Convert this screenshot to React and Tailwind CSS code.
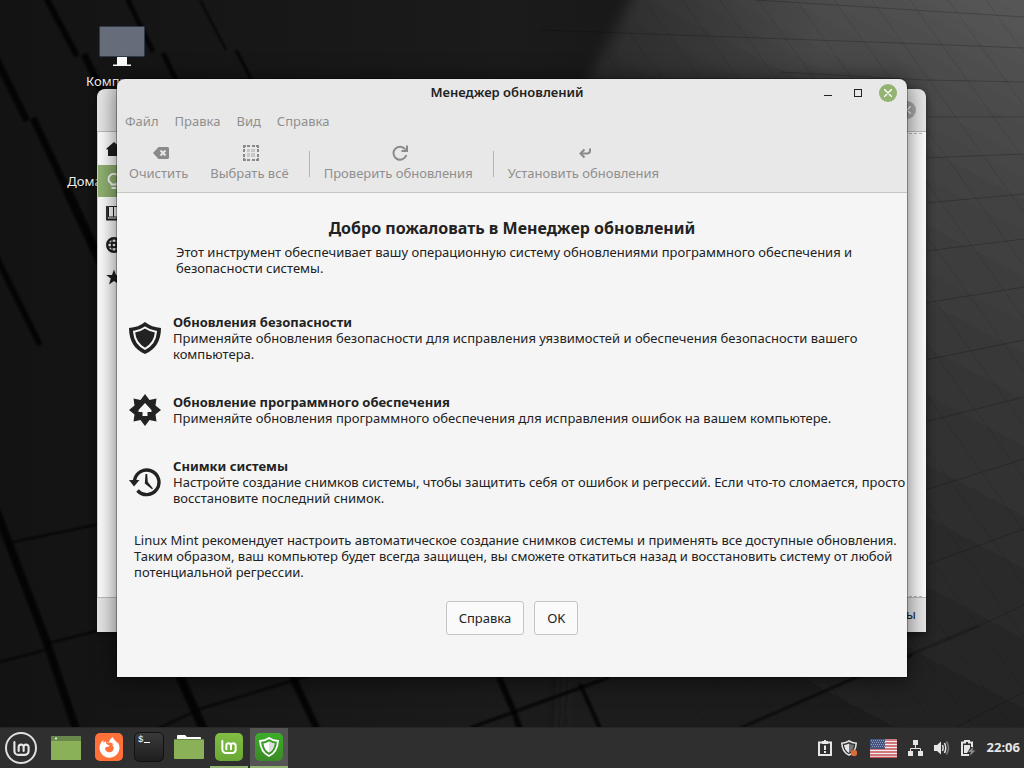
import React from "react";
import { FaFirefoxBrowser } from "react-icons/fa";

const GROOVES = [
  ["M42 -10 L77 56", 6], ["M84 54 L134 160", 7], ["M126 -4 L153 52", 5], ["M163 53 L200 130", 5],
  ["M200 0 L226 50", 2], ["M236 50 L262 100", 3], ["M-4 58 L27 121", 7], ["M33 118 L66 188", 7],
  ["M66 188 L110 282", 9], ["M-4 256 L40 345", 6], ["M-4 510 L46 640 L78 735", 8],
  ["M176 668 L206 735", 9], ["M292 676 L320 735", 7], ["M496 670 L514 712 L522 735", 6],
  ["M580 684 L603 735", 4],
];
const SEAMS = [
  ["M8 543 L100 524", 2], ["M46 644 L100 630", 2], ["M0 662 L45 650", 2], ["M155 730 L200 709 L295 680 L330 668", 2],
  ["M470 728 L610 677", 3], ["M738 729 L850 680 L912 655", 2], ["M900 659 L978 626", 1],
];
const ROWS = [
  "M755 0 L1024 17", "M540 30 L925 44 L1024 48", "M780 72 L925 80 L1024 82", "M925 117 L1024 117",
  "M925 158 L1024 154", "M925 203 L1024 194", "M925 251 L1024 239", "M925 303 L1024 287",
  "M925 360 L1024 340", "M925 422 L1024 397", "M925 490 L1024 459", "M925 565 L1024 529",
  "M970 630 L1024 605", "M955 728 L1024 692",
];
const DIAGONALS = Array.from({ length: 24 }, (_, i) => 150 + i * 38);

function Wallpaper() {
  return (
    <svg className="absolute inset-0 h-full w-full" viewBox="0 0 1024 727" preserveAspectRatio="none" aria-hidden="true">
      <defs>
        <linearGradient id="light" gradientUnits="userSpaceOnUse" x1="1024" y1="0" x2="660" y2="680">
          <stop offset="0" stopColor="#575757" />
          <stop offset="0.22" stopColor="#444444" />
          <stop offset="0.5" stopColor="#343434" />
          <stop offset="0.8" stopColor="#252525" />
          <stop offset="1" stopColor="#1b1b1b" />
        </linearGradient>
        <linearGradient id="fade" x1="0" y1="0" x2="1" y2="0">
          <stop offset="0" stopColor="#161616" stopOpacity="0" />
          <stop offset="0.35" stopColor="#161616" stopOpacity="0.45" />
          <stop offset="1" stopColor="#161616" stopOpacity="0" />
        </linearGradient>
        <linearGradient id="dark" x1="0" y1="0" x2="1" y2="0">
          <stop offset="0" stopColor="#131313" />
          <stop offset="0.5" stopColor="#1b1b1b" />
          <stop offset="1" stopColor="#1b1b1b" />
        </linearGradient>
        <filter id="soft" x="-10%" y="-10%" width="120%" height="120%">
          <feGaussianBlur stdDeviation="7" />
        </filter>
        <filter id="groove">
          <feGaussianBlur stdDeviation="1" />
        </filter>
        <clipPath id="lit">
          <path d="M645 0 H1024 V727 H680 V100 H575 Z" />
        </clipPath>
      </defs>
      <rect width="1024" height="727" fill="url(#dark)" />
      <path d="M645 -30 L590 80 L560 727 L560 800 H1070 V-30 Z" fill="url(#light)" filter="url(#soft)" />
      <rect x="500" width="320" height="160" fill="url(#fade)" />
      <g fill="none" stroke="#060606" strokeOpacity="0.8" filter="url(#groove)">
        {GROOVES.map(([d, w]) => <path key={d} d={d} strokeWidth={w} />)}
        {SEAMS.map(([d, w]) => <path key={d} d={d} strokeWidth={w} />)}
      </g>
      <g fill="none" stroke="#000" strokeOpacity="0.2">
        {ROWS.map((d) => <path key={d} d={d} />)}
      </g>
      <g fill="none" stroke="#000" strokeOpacity="0.1" clipPath="url(#lit)">
        {DIAGONALS.map((x) => <path key={x} d={`M${x} 0 L${x + 520} 727`} />)}
      </g>
    </svg>
  );
}

function MintGlyph({ className }) {
  return (
    <svg className={className} viewBox="0 0 24 24" fill="none" stroke="currentColor" strokeWidth="3" strokeLinecap="round" aria-hidden="true">
      <path d="M2 3 V15.5 A5.500 5.500 0 0 0 7.500 21 H17 A5 5 0 0 0 22 16 V10 A3.500 3.500 0 0 0 15 10 V15.500 M15 10 A3.500 3.500 0 0 0 8 10 V15.500" />
    </svg>
  );
}

function CloseGlyph() {
  return (
    <svg className="size-2" viewBox="0 0 8 8" stroke="#fff" strokeWidth="1.4" strokeLinecap="round" aria-hidden="true">
      <path d="M0.500 0.500 L7.500 7.500 M7.500 0.500 L0.500 7.500" />
    </svg>
  );
}

const SIDEBAR = [
  { name: "Добро пожаловать", icon: <path d="M8 1 L0.500 7.500 V8.500 H2 V15 H14 V8.500 H15.500 V7.500 Z" fill="currentColor" /> },
  {
    name: "Первые шаги", active: true,
    icon: (
      <g fill="none" stroke="currentColor" strokeWidth="1.800">
        <path d="M5.500 11.500 V10.500 C3.500 9.500 2.500 8 2.500 6 A5.500 5.200 0 0 1 13.500 6 C13.500 8 12.500 9.500 10.500 10.500 V11.500 Z" />
        <path d="M5.500 15 H10.500" />
      </g>
    ),
  },
  {
    name: "Документация",
    icon: (
      <g fill="none" stroke="currentColor">
        <path d="M1 1 V14.500 H15 V1" strokeWidth="1.800" />
        <path d="M2.500 1.500 H7.500 V12 H2.500 Z M7.500 1.500 H13.500 V12 H7.500 Z" />
      </g>
    ),
  },
  {
    name: "Помощь",
    icon: (
      <g fill="none" stroke="currentColor">
        <circle cx="8" cy="8" r="6.800" strokeWidth="2.400" />
        <circle cx="8" cy="8" r="2.500" strokeWidth="1.500" />
        <path d="M6 1 V15 M10 1 V15 M1 6 H15 M1 10 H15" strokeWidth="1.300" />
      </g>
    ),
  },
  { name: "Участие", icon: <path d="M8 0.500 L10 6 H15.800 L11.200 9.500 L13 15.500 L8 12 L3 15.500 L4.800 9.500 L0.200 6 H6 Z" fill="currentColor" /> },
];

function WelcomeWindow() {
  return (
    <section aria-label="Добро пожаловать" className="absolute top-[89px] right-[98px] left-[97px] flex flex-col overflow-hidden rounded-t-lg bg-[#e8e8e8] shadow-[0_2px_8px_rgba(0,0,0,0.5)]">
      <header className="flex h-[43px] items-center justify-end border-b border-[#bdbdbd] pr-2.5">
        <button aria-label="Закрыть окно приветствия" className="flex size-[18px] items-center justify-center rounded-full bg-[#adadad]"><CloseGlyph /></button>
      </header>
      <div className="flex min-h-[465px] border-l border-[#cfcfcf] bg-white pt-px">
        <nav className="w-44">
          {SIDEBAR.map((s) => (
            <button key={s.name} aria-label={s.name} className={s.active ? "flex h-8 w-full items-center bg-[#92b372] pl-2 text-white" : "flex h-8 w-full items-center pl-2 text-[#1f1f1f]"}>
              <svg className="size-4" viewBox="0 0 16 16" aria-hidden="true">{s.icon}</svg>
            </button>
          ))}
        </nav>
        <div className="mr-1 flex-1 border-y border-dashed border-[#bdbdbd]" />
      </div>
      <footer className="flex h-[35px] items-center justify-end border-t border-[#bdbdbd] pr-2.5">системы</footer>
    </section>
  );
}

const TOOLS = {
  clear: (
    <>
      <path d="M5.500 2 H14.500 A1.500 1.500 0 0 1 16 3.500 V12.500 A1.500 1.500 0 0 1 14.500 14 H5.500 L0 8 Z" fill="#8a8a8a" />
      <path d="M7.500 5.500 L12.500 10.500 M12.500 5.500 L7.500 10.500" stroke="#e8e8e8" strokeWidth="2" />
    </>
  ),
  select: (
    <>
      <path d="M0 1 H3 M4 1 H7 M9 1 H12 M13 1 H16 M0 15 H3 M4 15 H7 M9 15 H12 M13 15 H16 M1 0 V3 M1 4 V7 M1 9 V12 M1 13 V16 M15 0 V3 M15 4 V7 M15 9 V12 M15 13 V16" stroke="#8a8a8a" strokeWidth="2" fill="none" />
      <path d="M4 4 H7 V7 H4 Z M8 4 H12 V7 H8 Z M4 8 H7 V12 H4 Z M8 8 H12 V12 H8 Z" fill="#c8c8c8" />
    </>
  ),
  refresh: (
    <>
      <path d="M13 4 A6.500 6.500 0 1 0 14.300 10" fill="none" stroke="#8a8a8a" strokeWidth="2" />
      <path d="M16 0.500 V7 H9.500 V5 H12.500 L14 3.500 V0.500 Z" fill="#8a8a8a" />
    </>
  ),
  install: (
    <>
      <path d="M13 3.500 V5.500 A3 3 0 0 1 10 8.500 H4" fill="none" stroke="#8a8a8a" strokeWidth="2" />
      <path d="M7.500 4.500 L3.500 8.500 L7.500 12.500" fill="none" stroke="#8a8a8a" strokeWidth="2" />
    </>
  ),
};

function ToolButton({ icon, children }) {
  return (
    <button className="flex flex-col items-center gap-0.5 text-[#8f8f8f]">
      <svg className="ml-1 size-4" viewBox="0 0 16 16" aria-hidden="true">{TOOLS[icon]}</svg>
      <span className="leading-5">{children}</span>
    </button>
  );
}

const ShieldIcon = (
  <svg className="size-8 shrink-0" viewBox="0 0 32 32" aria-hidden="true">
    <path d="M16 0 C20 3.500 26 5.500 32 6 C32 19 26 28 16 32 C6 28 0 19 0 6 C6 5.500 12 3.500 16 0 Z" fill="#222" />
    <path d="M16 5.500 C19.500 8 23 9.200 27 9.700 C26.300 18 22.500 23.500 16 26.800 C9.500 23.500 5.700 18 5 9.700 C9 9.200 12.500 8 16 5.500 Z" fill="#222" stroke="#f5f5f5" strokeWidth="2" />
  </svg>
);
const StarIcon = (
  <svg className="size-8 shrink-0" viewBox="0 0 32 32" aria-hidden="true">
    <path d="M16 0 L20.500 6 L27.500 4.500 L26.500 11.500 L32 16 L26.500 20.500 L27.500 27.500 L20.500 26 L16 32 L11.500 26 L4.500 27.500 L5.500 20.500 L0 16 L5.500 11.500 L4.500 4.500 L11.500 6 Z" fill="#222" />
    <path d="M16 9 L22.500 16 V18 H18.500 V22 H13.500 V18 H9.500 V16 Z" fill="#f5f5f5" />
  </svg>
);
const HistoryIcon = (
  <svg className="size-8 shrink-0" viewBox="0 0 32 32" aria-hidden="true">
    <path d="M5.500 14.500 A12.300 12.300 0 1 1 8.500 24.500" fill="none" stroke="#222" strokeWidth="3.400" />
    <path d="M0 14 L10.500 14 L5 20.500 Z" fill="#222" />
    <path d="M16.500 8 L18.200 8 L18.800 16 L24 22.500 L23 23.300 L15.800 17.500 Z" fill="#222" />
  </svg>
);

const FEATURES = [
  {
    title: "Обновления безопасности", icon: ShieldIcon,
    text: <>Применяйте обновления безопасности для исправления уязвимостей и обеспечения безопасности вашего<br />компьютера.</>,
  },
  {
    title: "Обновление программного обеспечения", icon: StarIcon,
    text: <>Применяйте обновления программного обеспечения для исправления ошибок на вашем компьютере.</>,
  },
  {
    title: "Снимки системы", icon: HistoryIcon,
    text: <>Настройте создание снимков системы, чтобы защитить себя от ошибок и регрессий. Если что-то сломается, просто<br />восстановите последний снимок.</>,
  },
];

function UpdateManager() {
  return (
    <section aria-label="Менеджер обновлений" className="absolute inset-x-[117px] top-[79px] flex flex-col overflow-hidden rounded-t-lg bg-[#e8e8e8] whitespace-nowrap shadow-[0_0_0_1px_rgba(0,0,0,0.3),0_2px_24px_rgba(0,0,0,0.6)]">
      <header className="grid h-7 grid-cols-[1fr_auto_1fr] items-center pr-2.5">
        <span />
        <h1 className="font-semibold">Менеджер обновлений</h1>
        <div className="flex items-center justify-end gap-3">
          <button aria-label="Свернуть" className="flex h-[18px] w-[18px] items-center justify-center"><span className="mt-1 h-px w-2 bg-[#222]" /></button>
          <button aria-label="Развернуть" className="flex h-[18px] w-[18px] items-center justify-center"><span className="size-2 border border-[#222]" /></button>
          <button aria-label="Закрыть" className="flex size-[18px] items-center justify-center rounded-full bg-[#92b372]"><CloseGlyph /></button>
        </div>
      </header>
      <nav className="flex h-[30px] items-center gap-4 px-2 text-[#8f8f8f]">
        <button>Файл</button>
        <button>Правка</button>
        <button>Вид</button>
        <button>Справка</button>
      </nav>
      <div className="flex h-14 items-start border-b border-[#c4c4c4] px-3 pt-2">
        <div className="flex gap-[22px]">
          <ToolButton icon="clear">Очистить</ToolButton>
          <ToolButton icon="select">Выбрать всё</ToolButton>
        </div>
        <span className="mt-1.5 mr-3.5 ml-5 h-[26px] w-px bg-[#b4b4b4]" />
        <ToolButton icon="refresh">Проверить обновления</ToolButton>
        <span className="mt-1.5 mr-3.5 ml-5 h-[26px] w-px bg-[#b4b4b4]" />
        <ToolButton icon="install">Установить обновления</ToolButton>
      </div>
      <main className="bg-[#f5f5f5] px-3 pt-[23px] pb-[42px] leading-4">
        <h2 className="text-center text-base leading-6 font-bold">Добро пожаловать в Менеджер обновлений</h2>
        <p className="mt-1 ml-[47px]">
          Этот инструмент обеспечивает вашу операционную систему обновлениями программного обеспечения и<br />безопасности системы.
        </p>
        <div className="mt-[38px] flex flex-col gap-8">
          {FEATURES.map((f) => (
            <article key={f.title} className="flex items-center gap-3">
              {f.icon}
              <div>
                <h3 className="font-bold">{f.title}</h3>
                <p>{f.text}</p>
              </div>
            </article>
          ))}
        </div>
        <p className="mt-[26px] ml-[5px]">
          Linux Mint рекомендует настроить автоматическое создание снимков системы и применять все доступные обновления.<br />
          Таким образом, ваш компьютер будет всегда защищен, вы сможете откатиться назад и восстановить систему от любой<br />
          потенциальной регрессии.
        </p>
        <div className="mt-[21px] flex justify-center gap-2.5">
          <button className="h-[34px] rounded-[3px] border border-[#c4c4c4] bg-[#fafafa] px-3">Справка</button>
          <button className="h-[34px] rounded-[3px] border border-[#c4c4c4] bg-[#fafafa] px-3">OK</button>
        </div>
      </main>
    </section>
  );
}

function DesktopIcons() {
  return (
    <div className="absolute top-6 left-[62px] flex w-[120px] flex-col items-center gap-2 text-[#f0f0f0]">
      <button className="flex h-[92px] flex-col items-center gap-[3px]">
        <svg className="h-[44px] w-12" viewBox="0 0 48 44" aria-hidden="true">
          <rect x="1.500" y="2.500" width="45" height="30" rx="1" fill="#666c79" stroke="#30384a" />
          <path d="M19 33 H29 V40.500 H33 V42 H15 V40.500 H19 Z" fill="#fff" />
        </svg>
        <span className="leading-5 [text-shadow:1px_1px_1px_#000]">Компьютер</span>
      </button>
      <button className="flex flex-col items-center gap-[3px] whitespace-nowrap">
        <svg className="h-[44px] w-12" viewBox="0 0 48 44" aria-hidden="true">
          <path d="M2 6 H18 L21 10 H46 V40 H2 Z" fill="#8bb158" />
        </svg>
        <span className="leading-5 [text-shadow:1px_1px_1px_#000]">Домашняя папка</span>
      </button>
    </div>
  );
}

function Task({ label, active, open, children }) {
  return (
    <button
      aria-label={label}
      className={
        active
          ? "flex h-full w-[38px] items-center justify-center border-b-2 border-[#92b372] bg-[#545454]"
          : open
            ? "flex h-full w-[38px] items-center justify-center border-b-2 border-[#92b372]"
            : "flex h-full w-[38px] items-center justify-center border-b-2 border-transparent"
      }
    >
      {children}
    </button>
  );
}

function Panel() {
  return (
    <footer className="relative flex h-[41px] items-center justify-between border-t border-[#262626] bg-[#2f2f2f] pr-1 text-[#e6e6e6]">
      <div className="flex h-full items-center">
        <button aria-label="Меню" className="flex h-full w-[42px] items-center justify-center">
          <span className="flex size-8 items-center justify-center rounded-full border-2 border-[#e0e0e0]"><MintGlyph className="size-[17px]" /></span>
        </button>
        <button aria-label="Показать рабочий стол" className="flex h-full w-12 items-center justify-center">
          <svg className="h-6 w-[30px]" viewBox="0 0 30 24" aria-hidden="true">
            <rect width="30" height="24" fill="#8bb158" />
            <rect width="30" height="5" fill="#68874a" />
            <circle cx="5" cy="2.500" r="1" fill="#fff" />
          </svg>
        </button>
        <div className="flex h-full gap-0.5">
          <Task label="Firefox">
            <span className="flex size-7 items-center justify-center rounded-[5px] bg-[#ff7139]"><FaFirefoxBrowser className="size-[21px] text-white" /></span>
          </Task>
          <Task label="Терминал">
            <svg className="size-[30px]" viewBox="0 0 30 30" aria-hidden="true">
              <defs>
                <linearGradient id="term" x1="0" y1="0" x2="0" y2="1">
                  <stop offset="0" stopColor="#3a3a3a" />
                  <stop offset="1" stopColor="#1e1e1e" />
                </linearGradient>
              </defs>
              <rect x="0.500" y="0.500" width="29" height="29" rx="5" fill="url(#term)" stroke="#111" />
              <text x="4" y="10" fontSize="9" fontFamily="Liberation Mono, monospace" fill="#fff">$</text>
              <path d="M10 10.500 H16" stroke="#fff" />
            </svg>
          </Task>
          <Task label="Файлы">
            <svg className="h-6 w-[30px]" viewBox="0 0 30 24" aria-hidden="true">
              <path d="M3 1 Q3 0 4 0 H11 L13 2 H26 Q27 2 27 3 V6 H3 Z" fill="#fff" />
              <path d="M0 4 H30 V23 Q30 24 29 24 H1 Q0 24 0 23 Z" fill="#8bb158" />
              <path d="M0 4.500 H30" stroke="#68874a" />
            </svg>
          </Task>
          <Task label="Добро пожаловать" open>
            <span className="flex size-7 items-center justify-center rounded-[5px] bg-linear-to-b from-[#82bd43] to-[#68a834] text-white"><MintGlyph className="size-4" /></span>
          </Task>
          <Task label="Менеджер обновлений" active>
            <span className="flex size-7 items-center justify-center rounded-[5px] bg-linear-to-b from-[#3cad28] to-[#3a8a26]">
              <svg className="size-5" viewBox="0 0 20 20" aria-hidden="true">
                <path d="M10 1 C12.500 2.800 15.500 3.700 19 4 C18.500 11.500 15.500 16.500 10 19 C4.500 16.500 1.500 11.500 1 4 C4.500 3.700 7.500 2.800 10 1 Z" fill="none" stroke="#fff" strokeWidth="1.800" />
                <path d="M10 4.500 C12 5.600 13.500 6.200 15.500 6.500 C15 10.800 13.300 13.700 10 15.500 C6.700 13.700 5 10.800 4.500 6.500 C6.500 6.200 8 5.600 10 4.500 Z" fill="#fff" />
                <path d="M10 4.500 C12 5.600 13.500 6.200 15.500 6.500 C15 10.800 13.300 13.700 10 15.500 Z" fill="#ddd" />
              </svg>
            </span>
          </Task>
        </div>
      </div>
      <div className="flex items-center">
        <button aria-label="Отчёты системы" className="flex w-6 justify-center">
          <svg className="size-4" viewBox="0 0 16 16" aria-hidden="true">
            <path d="M2 2.500 H14 V15 H2 Z" fill="none" stroke="#e6e6e6" strokeWidth="2" />
            <path d="M5 1 H7 V0 H9 V1 H11 V4 H5 Z" fill="#e6e6e6" />
            <path d="M8 5.500 V10 M8 11 V13" stroke="#e6e6e6" strokeWidth="2" />
          </svg>
        </button>
        <button aria-label="Обновления" className="flex w-6 justify-center">
          <svg className="size-4" viewBox="0 0 16 16" aria-hidden="true">
            <path d="M8 1 C10 2.300 12.500 3 15.200 3.200 C15 9 12.500 13 8 15 C3.500 13 1 9 0.800 3.200 C3.500 3 6 2.300 8 1 Z" fill="none" stroke="#e6e6e6" strokeWidth="1.500" />
            <path d="M8 3.500 V13 C5 11.500 3.500 8.500 3 5 C5 4.800 6.500 4.300 8 3.500 Z" fill="#e6e6e6" />
            <path d="M8 3.500 V13 C11 11.500 12.500 8.500 13 5 C11 4.800 9.500 4.300 8 3.500 Z" fill="#777" />
            <circle cx="13" cy="13" r="3.200" fill="#dd6b35" />
          </svg>
        </button>
        <button aria-label="Раскладка: английская (США)" className="flex w-[42px] justify-center pl-1">
          <svg className="h-[19px] w-[27px]" viewBox="0 0 27 19" aria-hidden="true">
            <rect width="27" height="19" rx="1" fill="#efefef" />
            <path d="M0 1 H27 M0 4 H27 M0 7 H27 M0 10 H27 M0 13 H27 M0 16 H27 M0 18.500 H27" stroke="#c94f5a" strokeWidth="1.500" />
            <rect width="15" height="10" fill="#44547f" />
            <path d="M1 1.500 H15 M2 3.500 H15 M1 5.500 H15 M2 7.500 H15" stroke="#a5aec6" strokeWidth="0.800" strokeDasharray="1 1" />
          </svg>
        </button>
        <button aria-label="Сеть" className="flex w-[26px] justify-center">
          <svg className="size-4" viewBox="0 0 16 16" aria-hidden="true">
            <path d="M5 0 H10 V5 H5 Z M0 11 H5 V16 H0 Z M10 11 H15 V16 H10 Z" fill="#e6e6e6" />
            <path d="M7.500 5 V8 M2.500 11 V8.500 H12.500 V11" fill="none" stroke="#e6e6e6" />
          </svg>
        </button>
        <button aria-label="Громкость" className="flex w-[26px] justify-center">
          <svg className="size-4" viewBox="0 0 16 16" fill="none" aria-hidden="true">
            <path d="M0 5 H3 L7 1.500 V14.500 L3 11 H0 Z" fill="#e6e6e6" />
            <path d="M8.500 5 Q10 8 8.500 11 M10.500 3 Q13 8 10.500 13" stroke="#e6e6e6" strokeWidth="1.500" />
            <path d="M12.500 1.500 Q16.500 8 12.500 14.500" stroke="#7d7d7d" strokeWidth="1.500" />
          </svg>
        </button>
        <button aria-label="Батарея" className="flex w-[26px] justify-center">
          <svg className="size-4" viewBox="0 0 16 16" aria-hidden="true">
            <path d="M9 15 H2 V2.500 H5 V1 H9 V2.500 H12 V7" fill="none" stroke="#e6e6e6" strokeWidth="2" />
            <path d="M4 5 H10 V8 L7 13 H4 Z" fill="#e6e6e6" />
            <path d="M13.500 6.500 L8 12 H11 L9.500 16 L15.500 10.500 H12.500 Z" fill="#8c8c8c" />
          </svg>
        </button>
        <time className="pl-1.5 font-bold">22:06</time>
      </div>
    </footer>
  );
}

export default function App() {
  return (
    <div className="flex min-h-screen flex-col overflow-hidden bg-[#151515] font-['Noto_Sans',sans-serif] text-[13px] text-[#222]">
      <div className="relative min-h-[700px] flex-1 overflow-hidden">
        <Wallpaper />
        <DesktopIcons />
        <WelcomeWindow />
        <UpdateManager />
      </div>
      <Panel />
    </div>
  );
}
